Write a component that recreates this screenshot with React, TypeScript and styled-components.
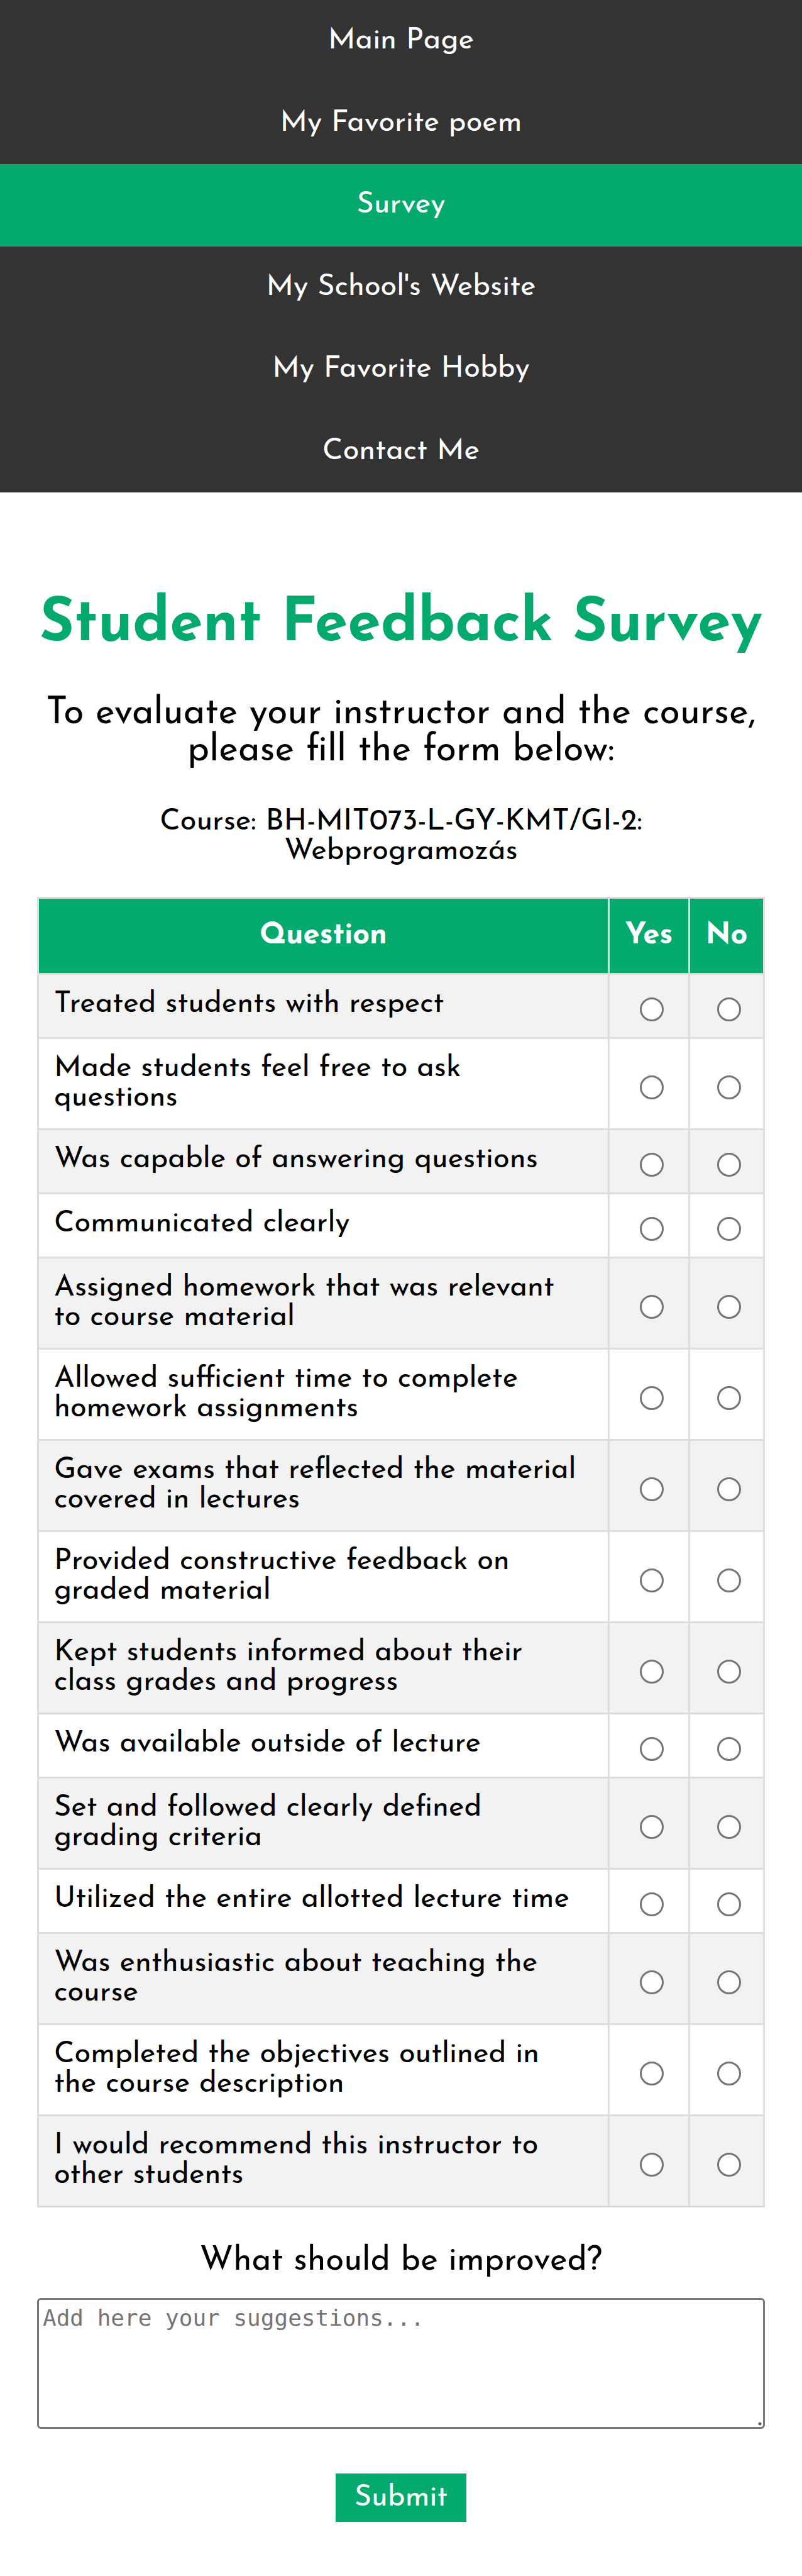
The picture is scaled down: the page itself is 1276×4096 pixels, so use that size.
import React from 'react';
import styled, { createGlobalStyle, css } from 'styled-components';

const green = '#04aa6d';
const rule = '3px solid #dddddd';

const GlobalStyle = createGlobalStyle`
  *, *::before, *::after {
    box-sizing: border-box;
  }
  body {
    margin: 0;
    background: #ffffff;
    color: #000000;
    font-family: 'Josefin Sans', Lato, sans-serif;
    font-size: 47px;
    line-height: 47px;
  }
`;

const Nav = styled.nav`
  display: grid;
  grid-auto-rows: 1fr;
  min-height: 783px;
  background: #333333;
`;

const NavLink = styled.a<{ $active?: boolean }>`
  padding: 42px 24px 41px;
  color: #ffffff;
  text-align: center;
  text-decoration: none;
  background: ${({ $active }) => ($active ? green : 'transparent')};
`;

const Main = styled.main`
  padding: 164px 59px 85px;
`;

const Title = styled.h1`
  margin: 0 0 64px;
  color: ${green};
  font-size: 95px;
  font-weight: 700;
  line-height: 95px;
  text-align: center;
`;

const Intro = styled.p`
  margin: 0 0 60px;
  font-size: 59px;
  line-height: 59px;
  text-align: center;
`;

const Course = styled.p`
  margin: 0 0 48px;
  text-align: center;
`;

const Form = styled.form`
  display: flex;
  flex-direction: column;
`;

const Table = styled.table`
  width: 100%;
  border-collapse: collapse;
  table-layout: fixed;
`;

const cell = css`
  border: ${rule};
  padding: 24px;
`;

const HeadCell = styled.th<{ $width?: number }>`
  ${cell}
  width: ${({ $width }) => ($width ? `${$width}px` : 'auto')};
  padding: 36px 0 35px;
  background: ${green};
  color: #ffffff;
  font-weight: 700;
  text-align: center;
`;

const Row = styled.tr`
  &:nth-child(odd) {
    background: #f2f2f2;
  }
`;

const QuestionCell = styled.td`
  ${cell}
  vertical-align: top;
`;

const ChoiceCell = styled.td`
  ${cell}
  padding: 36px 0 25px 8px;
  vertical-align: middle;
`;

const Radio = styled.input`
  appearance: none;
  display: block;
  width: 38px;
  height: 38px;
  margin: 0 auto;
  border: 3px solid #767676;
  border-radius: 50%;
  background: #ffffff;

  &:checked {
    background: radial-gradient(${green} 50%, #ffffff 55%);
  }
`;

const CommentLabel = styled.label`
  margin: 59px 0 32px;
  font-size: 53px;
  line-height: 53px;
  text-align: center;
`;

const Comment = styled.textarea`
  width: 100%;
  height: 208px;
  padding: 6px;
  border: 3px solid #767676;
  border-radius: 6px;
  background: #ffffff;
  font-family: Consolas, 'DejaVu Sans Mono', monospace;
  font-size: 36px;
  line-height: 45px;
  resize: both;

  &::placeholder {
    color: #757575;
  }
  &::-webkit-resizer {
    background: radial-gradient(circle at 10px 10px, #606060 2px, transparent 3px);
  }
`;

const Submit = styled.button`
  align-self: center;
  margin-top: 71px;
  padding: 16px 30px 14px;
  border: 0;
  background: ${green};
  color: #ffffff;
  font: inherit;
`;

const links = [
  'Main Page',
  'My Favorite poem',
  'Survey',
  "My School's Website",
  'My Favorite Hobby',
  'Contact Me',
];

const questions = [
  'Treated students with respect',
  'Made students feel free to ask questions',
  'Was capable of answering questions',
  'Communicated clearly',
  'Assigned homework that was relevant to\u00a0course material',
  'Allowed sufficient time to complete homework assignments',
  'Gave exams that reflected the material covered in lectures',
  'Provided constructive feedback on graded material',
  'Kept students informed about their class grades and progress',
  'Was available outside of lecture',
  'Set and followed clearly defined grading criteria',
  'Utilized the entire allotted lecture time',
  'Was enthusiastic about teaching the course',
  'Completed the objectives outlined in the\u00a0course description',
  'I would recommend this instructor to other students',
];

const choices = ['yes', 'no'];

export default function App() {
  return (
    <>
      <GlobalStyle />
      <Nav>
        {links.map((label) => (
          <NavLink key={label} href="#" $active={label === 'Survey'}>
            {label}
          </NavLink>
        ))}
      </Nav>
      <Main>
        <Title>Student Feedback Survey</Title>
        <Intro>To evaluate your instructor and the course, please fill the form below:</Intro>
        <Course>
          Course: BH-MIT073-L-GY-KMT/GI-2:
          <br />
          Webprogramozás
        </Course>
        <Form onSubmit={(event) => event.preventDefault()}>
          <Table>
            <thead>
              <tr>
                <HeadCell scope="col">Question</HeadCell>
                <HeadCell scope="col" id="yes" $width={128}>
                  Yes
                </HeadCell>
                <HeadCell scope="col" id="no" $width={119}>
                  No
                </HeadCell>
              </tr>
            </thead>
            <tbody>
              {questions.map((question, index) => (
                <Row key={question}>
                  <QuestionCell id={`question-${index}`}>{question}</QuestionCell>
                  {choices.map((choice) => (
                    <ChoiceCell key={choice}>
                      <Radio
                        type="radio"
                        name={`answer-${index}`}
                        value={choice}
                        aria-labelledby={`question-${index} ${choice}`}
                      />
                    </ChoiceCell>
                  ))}
                </Row>
              ))}
            </tbody>
          </Table>
          <CommentLabel htmlFor="comment">What should be improved?</CommentLabel>
          <Comment id="comment" placeholder="Add here your suggestions..." />
          <Submit type="submit">Submit</Submit>
        </Form>
      </Main>
    </>
  );
}
